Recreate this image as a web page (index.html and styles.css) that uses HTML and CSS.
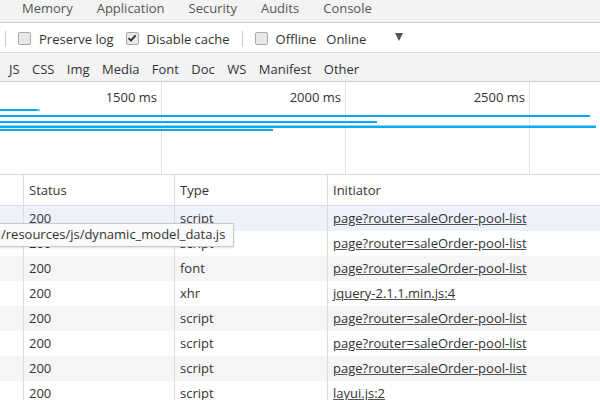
FILE: index.html
```html
<!DOCTYPE html>
<html>
<head>
<meta charset="utf-8">
<link rel="stylesheet" href="styles.css">
</head>
<body>
<div class="devtools">
  <div class="tabbar">
    <span class="tab">Memory</span>
    <span class="tab">Application</span>
    <span class="tab">Security</span>
    <span class="tab">Audits</span>
    <span class="tab">Console</span>
  </div>
  <div class="toolbar">
    <span class="sep"></span>
    <label class="check"><span class="box"></span>Preserve log</label>
    <label class="check"><span class="box checked"><svg viewBox="0 0 12 12" width="12" height="12"><path d="M2.5 6.2 L5 8.6 L9.6 3.4" fill="none" stroke="#222" stroke-width="1.6"/></svg></span>Disable cache</label>
    <span class="sep"></span>
    <label class="check"><span class="box"></span>Offline</label>
    <span class="select">Online<span class="arrow"></span></span>
  </div>
  <div class="filters">
    <span class="filter">JS</span>
    <span class="filter">CSS</span>
    <span class="filter">Img</span>
    <span class="filter">Media</span>
    <span class="filter">Font</span>
    <span class="filter">Doc</span>
    <span class="filter">WS</span>
    <span class="filter">Manifest</span>
    <span class="filter">Other</span>
  </div>
  <div class="overview">
    <div class="ticks">
      <div class="tick">1500 ms</div>
      <div class="tick">2000 ms</div>
      <div class="tick">2500 ms</div>
      <div class="tick"></div>
    </div>
    <div class="bars">
      <div class="bar bar-a" style="width:40px"></div>
      <div class="bar bar-b" style="width:590px"></div>
      <div class="bar bar-c" style="width:377px"></div>
      <div class="bar bar-d" style="width:596px"></div>
      <div class="bar bar-e" style="width:273px"></div>
    </div>
  </div>
  <div class="table">
    <div class="row head">
      <div class="cell"></div>
      <div class="cell">Status</div>
      <div class="cell">Type</div>
      <div class="cell">Initiator</div>
    </div>
    <div class="row selected">
      <div class="cell"></div>
      <div class="cell">200</div>
      <div class="cell">script</div>
      <div class="cell"><a class="link">page?router=saleOrder-pool-list</a></div>
    </div>
    <div class="row">
      <div class="cell"></div>
      <div class="cell">200</div>
      <div class="cell">script</div>
      <div class="cell"><a class="link">page?router=saleOrder-pool-list</a></div>
    </div>
    <div class="row stripe">
      <div class="cell"></div>
      <div class="cell">200</div>
      <div class="cell">font</div>
      <div class="cell"><a class="link">page?router=saleOrder-pool-list</a></div>
    </div>
    <div class="row">
      <div class="cell"></div>
      <div class="cell">200</div>
      <div class="cell">xhr</div>
      <div class="cell"><a class="link">jquery-2.1.1.min.js:4</a></div>
    </div>
    <div class="row stripe">
      <div class="cell"></div>
      <div class="cell">200</div>
      <div class="cell">script</div>
      <div class="cell"><a class="link">page?router=saleOrder-pool-list</a></div>
    </div>
    <div class="row">
      <div class="cell"></div>
      <div class="cell">200</div>
      <div class="cell">script</div>
      <div class="cell"><a class="link">page?router=saleOrder-pool-list</a></div>
    </div>
    <div class="row stripe">
      <div class="cell"></div>
      <div class="cell">200</div>
      <div class="cell">script</div>
      <div class="cell"><a class="link">page?router=saleOrder-pool-list</a></div>
    </div>
    <div class="row">
      <div class="cell"></div>
      <div class="cell">200</div>
      <div class="cell">script</div>
      <div class="cell"><a class="link">layui.js:2</a></div>
    </div>
  </div>
  <div class="tooltip">/resources/js/dynamic_model_data.js</div>
</div>
</body>
</html>
```
FILE: styles.css
```css
html, body {
  margin: 0;
  padding: 0;
  background: #fff;
}
body {
  width: 600px;
  height: 400px;
  overflow: hidden;
  font-family: "Open Sans", "Noto Sans", sans-serif;
  color: #333;
}
.devtools {
  position: relative;
  width: 600px;
  height: 400px;
  overflow: hidden;
  display: flex;
  flex-direction: column;
}
.tabbar {
  height: 22px;
  flex: none;
  background: #f3f3f3;
  border-bottom: 1px solid #cdcdcd;
  display: flex;
  align-items: center;
  padding-left: 10px;
  font-size: 13px;
  color: #555;
}
.tab {
  padding: 0 12px;
  line-height: 16px;
  margin-top: -6px;
}
.toolbar {
  flex: none;
  background: #fff;
  border-bottom: 1px solid #dcdcdc;
  display: flex;
  align-items: center;
  font-size: 13px;
  color: #333;
  padding-left: 5px;
  padding-top: 2px;
  box-sizing: border-box;
  height: 30px;
}
.sep {
  width: 1px;
  height: 16px;
  background: #ccc;
  margin-right: 12px;
}
.check {
  display: flex;
  align-items: center;
  margin-right: 12px;
}
.box {
  width: 11px;
  height: 11px;
  border: 1px solid #a8a8a8;
  border-radius: 2px;
  background: #e8e8e8;
  margin-right: 8px;
  position: relative;
  display: block;
}
.box svg {
  position: absolute;
  left: -1px;
  top: -1px;
}
.select {
  display: flex;
  align-items: center;
  margin-left: -2px;
}
.arrow {
  width: 0;
  height: 0;
  border-left: 4.5px solid transparent;
  border-right: 4.5px solid transparent;
  border-top: 8px solid #555;
  margin-left: 29px;
  margin-top: -4px;
}
.filters {
  height: 29px;
  flex: none;
  box-sizing: border-box;
  background: #f3f3f3;
  border-bottom: 1px solid #cdcdcd;
  display: flex;
  align-items: center;
  padding-left: 3px;
  padding-top: 3px;
  font-size: 13px;
  color: #333;
  gap: 0.4px;
}
.filter {
  padding: 0 6px;
}
.overview {
  position: relative;
  height: 93px;
  flex: none;
  border-bottom: 1px solid #d6d6d6;
  box-sizing: border-box;
}
.ticks {
  display: flex;
  height: 100%;
  margin-left: -22px;
}
.tick {
  flex: none;
  border-right: 1px solid #e3e3e3;
  text-align: right;
  padding-right: 4px;
  box-sizing: border-box;
  width: 184px;
  font-size: 13px;
  line-height: 16px;
  padding-top: 7px;
  color: #333;
}
.bars {
  position: absolute;
  left: 0;
  top: 27px;
  right: 0;
}
.bar {
  height: 2px;
  background: #05a9f4;
}
.bar-a { background: linear-gradient(to right, #05a9f4 90%, #8fd6f8); }
.bar-b { margin-top: 4px; }
.bar-c { margin-top: 4px; }
.bar-d { margin-top: 2px; height: 3px; background: linear-gradient(#8fd6f8 0 1px, #05a9f4 1px); }
.bar-e { margin-top: 1px; }
.table {
  flex: 1;
  font-size: 13px;
  color: #333;
}
.row {
  display: grid;
  grid-template-columns: 23px 151px 153px 1fr;
  height: 25px;
  align-items: stretch;
}
.row.head {
  height: 31px;
  border-bottom: 1px solid #dcdcdc;
  box-sizing: border-box;
}
.row.selected { background: #edf2fa; }
.row.stripe { background: #f5f5f5; }
.cell {
  border-left: 1px solid #dcdcdc;
  padding-left: 5px;
  padding-bottom: 2px;
  box-sizing: border-box;
  display: flex;
  align-items: center;
  white-space: nowrap;
  overflow: hidden;
}
.row.head .cell {
  padding-bottom: 1px;
}
.cell:first-child {
  border-left: none;
}
.link {
  color: #333;
  text-decoration: underline;
  text-decoration-color: #555;
}
.tooltip {
  position: absolute;
  left: -9px;
  top: 223px;
  height: 22px;
  line-height: 21px;
  padding: 0 8px 0 9px;
  background: #fafafa;
  border: 1px solid #c9c9c9;
  box-shadow: 0 1px 2px rgba(0,0,0,0.12);
  font-size: 13px;
  color: #333;
  white-space: nowrap;
}
```
